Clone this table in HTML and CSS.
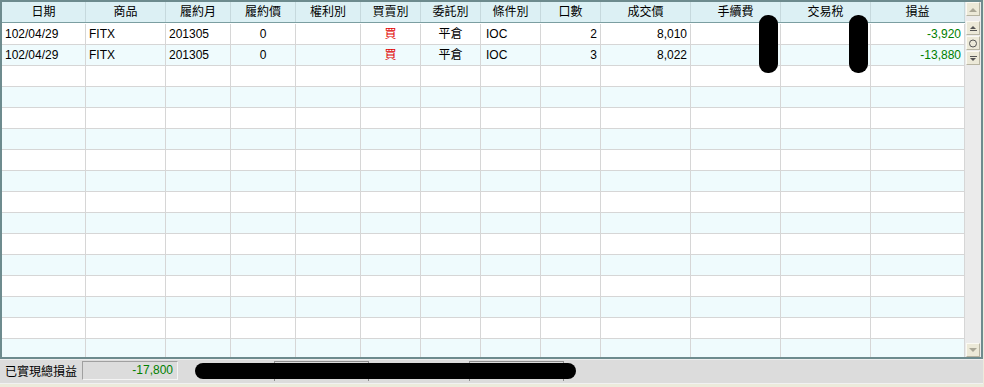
FILE: index.html
```html
<!DOCTYPE html>
<html lang="zh-Hant">
<head>
<meta charset="utf-8">
<title>已實現損益</title>
<link rel="stylesheet" href="styles.css">
</head>
<body>
<div class="wrap">
  <div class="frame">
    <div class="grid">
      <div class="row head">
        <div class="c">日期</div><div class="c">商品</div><div class="c">履約月</div><div class="c">履約價</div><div class="c">權利別</div><div class="c">買賣別</div><div class="c">委託別</div><div class="c">條件別</div><div class="c">口數</div><div class="c">成交價</div><div class="c">手續費</div><div class="c">交易稅</div><div class="c">損益</div>
      </div>
      <div class="body">
        <div class="row">
          <div class="l">102/04/29</div><div class="l">FITX</div><div class="l">201305</div><div class="c">0</div><div></div><div class="c red">買</div><div class="c">平倉</div><div class="l pl">IOC</div><div class="r">2</div><div class="r">8,010</div><div></div><div></div><div class="r green">-3,920</div>
        </div>
        <div class="row">
          <div class="l">102/04/29</div><div class="l">FITX</div><div class="l">201305</div><div class="c">0</div><div></div><div class="c red">買</div><div class="c">平倉</div><div class="l pl">IOC</div><div class="r">3</div><div class="r">8,022</div><div></div><div></div><div class="r green">-13,880</div>
        </div>
        <div class="row"><div></div><div></div><div></div><div></div><div></div><div></div><div></div><div></div><div></div><div></div><div></div><div></div><div></div></div>
        <div class="row"><div></div><div></div><div></div><div></div><div></div><div></div><div></div><div></div><div></div><div></div><div></div><div></div><div></div></div>
        <div class="row"><div></div><div></div><div></div><div></div><div></div><div></div><div></div><div></div><div></div><div></div><div></div><div></div><div></div></div>
        <div class="row"><div></div><div></div><div></div><div></div><div></div><div></div><div></div><div></div><div></div><div></div><div></div><div></div><div></div></div>
        <div class="row"><div></div><div></div><div></div><div></div><div></div><div></div><div></div><div></div><div></div><div></div><div></div><div></div><div></div></div>
        <div class="row"><div></div><div></div><div></div><div></div><div></div><div></div><div></div><div></div><div></div><div></div><div></div><div></div><div></div></div>
        <div class="row"><div></div><div></div><div></div><div></div><div></div><div></div><div></div><div></div><div></div><div></div><div></div><div></div><div></div></div>
        <div class="row"><div></div><div></div><div></div><div></div><div></div><div></div><div></div><div></div><div></div><div></div><div></div><div></div><div></div></div>
        <div class="row"><div></div><div></div><div></div><div></div><div></div><div></div><div></div><div></div><div></div><div></div><div></div><div></div><div></div></div>
        <div class="row"><div></div><div></div><div></div><div></div><div></div><div></div><div></div><div></div><div></div><div></div><div></div><div></div><div></div></div>
        <div class="row"><div></div><div></div><div></div><div></div><div></div><div></div><div></div><div></div><div></div><div></div><div></div><div></div><div></div></div>
        <div class="row"><div></div><div></div><div></div><div></div><div></div><div></div><div></div><div></div><div></div><div></div><div></div><div></div><div></div></div>
        <div class="row"><div></div><div></div><div></div><div></div><div></div><div></div><div></div><div></div><div></div><div></div><div></div><div></div><div></div></div>
        <div class="row"><div></div><div></div><div></div><div></div><div></div><div></div><div></div><div></div><div></div><div></div><div></div><div></div><div></div></div>
      </div>
    </div>
    <div class="vscroll">
      <div class="sbtn up">
        <svg width="12" height="12" viewBox="0 0 12 12"><path d="M2 9 L6 5 L10 9 Z" fill="#aaa797"/></svg>
      </div>
      <div class="sgroup">
        <div class="sbtn">
          <svg width="12" height="12" viewBox="0 0 12 12"><path d="M3 7 L6 4 L9 7 Z" fill="#555"/><rect x="3" y="8" width="7" height="1" fill="#555"/></svg>
        </div>
        <div class="sbtn">
          <svg width="12" height="12" viewBox="0 0 12 12"><circle cx="6" cy="6.5" r="3.5" fill="none" stroke="#555" stroke-width="1"/></svg>
        </div>
        <div class="sbtn">
          <svg width="12" height="12" viewBox="0 0 12 12"><rect x="3" y="4" width="7" height="1" fill="#555"/><path d="M3 6 L6 9 L9 6 Z" fill="#555"/></svg>
        </div>
      </div>
      <div class="sfill"></div>
      <div class="sbtn down">
        <svg width="12" height="12" viewBox="0 0 12 12"><path d="M2 4 L6 8 L10 4 Z" fill="#aaa797"/></svg>
      </div>
    </div>
    <div class="mask m1"></div>
    <div class="mask m2"></div>
  </div>
  <div class="bar">
    <span class="label">已實現總損益</span>
    <span class="total">-17,800</span>
    <span class="tab t1"></span>
    <span class="tab t2"></span>
    <div class="mask m3"></div>
  </div>
</div>
</body>
</html>
```

FILE: styles.css
```css
html, body {
  margin: 0;
  padding: 0;
}
body {
  background: #ecebdc;
  width: 984px;
  height: 387px;
  overflow: hidden;
  font-family: "Liberation Sans", "Noto Sans CJK TC", sans-serif;
  font-size: 12px;
  color: #000;
}
.wrap {
  width: 983px;
}
.frame {
  position: relative;
  box-sizing: border-box;
  height: 359px;
  border: 2px solid #6d8b8e;
  display: flex;
  background: #fff;
}
.grid {
  width: 963px;
  overflow: hidden;
  display: flex;
  flex-direction: column;
}
.row {
  display: grid;
  grid-template-columns: 84px 80px 65px 65px 65px 60px 60px 60px 60px 90px 90px 90px 94px;
  height: 21px;
  box-sizing: border-box;
  border-bottom: 1px solid #d6d6d6;
  flex: none;
}
.row > div {
  border-right: 1px solid #d6d6d6;
  padding: 0 3px;
  line-height: 20px;
  white-space: nowrap;
  overflow: hidden;
}
.head {
  background: #dcf0f4;
  border-bottom: 1px solid #7b9ea1;
  font-family: "Noto Sans CJK TC", sans-serif;
}
.head > div {
  border-right-color: #c6d9dd;
  line-height: 20px;
}
.body {
  padding-top: 1px;
  display: flex;
  flex-direction: column;
}
.body .row:nth-child(even) {
  background: #effbfd;
}
.l { text-align: left; }
.c { text-align: center; }
.r { text-align: right; }
.pl { padding-left: 5px !important; }
.red { color: #e00000; font-family: "Noto Sans CJK TC", sans-serif; }
.green { color: #008000; }
.row > .c { font-family: "Liberation Sans", "Noto Sans CJK TC", sans-serif; }

.vscroll {
  width: 16px;
  background: #ebebeb;
  display: flex;
  flex-direction: column;
  align-items: flex-end;
  padding-right: 1px;
  box-sizing: border-box;
}
.sbtn {
  width: 14px;
  height: 14px;
  box-sizing: border-box;
  background: #ece9d8;
  border: 1px solid;
  border-color: #fbfaf3 #b7b4a2 #b7b4a2 #fbfaf3;
  display: flex;
  align-items: center;
  justify-content: center;
}
.sbtn.up {
  margin-top: 0;
}
.sgroup {
  margin-top: 5px;
  display: flex;
  flex-direction: column;
  gap: 1px;
}
.sfill {
  flex: 1;
}
.mask {
  position: absolute;
  background: #000;
  border-radius: 9px;
}
.m1 {
  left: 757px;
  top: 13px;
  width: 19px;
  height: 58px;
}
.m2 {
  left: 847px;
  top: 13px;
  width: 19px;
  height: 58px;
}

.bar {
  position: relative;
  height: 25px;
  box-sizing: border-box;
  background: #dcdcdc;
  border-top: 1px solid #eeeeee;
  border-bottom: 1px solid #f2f2f2;
  display: flex;
  align-items: flex-start;
  font-family: "Noto Sans CJK TC", sans-serif;
}
.label {
  margin-left: 5px;
  margin-top: 3px;
  line-height: 16px;
  width: 77px;
}
.total {
  margin-top: 1px;
  width: 96px;
  height: 19px;
  box-sizing: border-box;
  border: 1px solid;
  border-color: #a0a0a0 #f4f4f4 #f4f4f4 #a0a0a0;
  color: #008000;
  text-align: right;
  padding-right: 4px;
  line-height: 17px;
  font-family: "Liberation Sans", sans-serif;
}
.tab {
  margin-top: 1px;
  width: 95px;
  height: 20px;
  box-sizing: border-box;
  border: 1px solid #8e8e8e;
  border-bottom: none;
}
.t1 { margin-left: 96px; }
.t2 { margin-left: 100px; }
.m3 {
  left: 195px;
  top: 3px;
  width: 381px;
  height: 16px;
  border-radius: 8px;
}
```
